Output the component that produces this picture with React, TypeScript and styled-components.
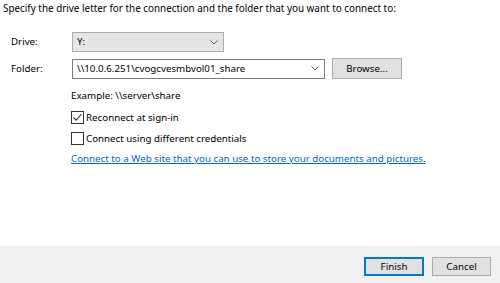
import React from "react";
import styled, { createGlobalStyle } from "styled-components";

const Global = createGlobalStyle`
  html, body { margin: 0; padding: 0; background: #ffffff; }
  body { font-family: "Noto Sans", "Open Sans", sans-serif; font-size: 9.75px; color: #000; }
  * { box-sizing: border-box; }
`;

const Window = styled.div`
  width: 500px;
  height: 283px;
  display: flex;
  flex-direction: column;
  background: #ffffff;
  overflow: hidden;
`;

const Content = styled.div`
  flex: 1;
  padding: 1px 0 0 3px;
`;

const Intro = styled.div`
  font-size: 9.9px;
  line-height: 15px;
  height: 15px;
`;

const Form = styled.div`
  margin-top: 16px;
  padding-left: 8px;
  display: grid;
  grid-template-columns: 61px auto;
  row-gap: 6px;
  align-items: center;
`;

const Label = styled.div`
  line-height: 20px;
`;

const Row = styled.div`
  display: flex;
  align-items: center;
  gap: 7px;
`;

const Field = styled.div<{ $w: number; $gray?: boolean }>`
  width: ${(p) => p.$w}px;
  height: 20px;
  border: 1px solid ${(p) => (p.$gray ? "#adadad" : "#7a7a7a")};
  background: ${(p) => (p.$gray ? "#e5e5e5" : "#ffffff")};
  display: flex;
  align-items: center;
  padding: 0 0 0 4px;
  line-height: 18px;
`;

const FieldText = styled.span`
  flex: 1;
  white-space: nowrap;
`;

const Chevron = styled.svg`
  width: 8px;
  height: 5px;
  margin-right: 5px;
  flex: none;
`;

const Button = styled.button<{ $w: number; $default?: boolean }>`
  width: ${(p) => p.$w}px;
  height: 21px;
  padding: 0;
  font: inherit;
  color: #000;
  background: #e1e1e1;
  border: ${(p) => (p.$default ? "2px solid #0078d7" : "1px solid #adadad")};
  display: flex;
  align-items: center;
  justify-content: center;
`;

const Options = styled.div`
  padding-left: 68px;
  display: flex;
  flex-direction: column;
`;

const Example = styled.div`
  margin-top: 9px;
  line-height: 15px;
`;

const CheckRow = styled.label<{ $gap: number }>`
  display: flex;
  align-items: center;
  gap: 2px;
  height: 15px;
  margin-top: ${(p) => p.$gap}px;
`;

const Box = styled.span`
  width: 13px;
  height: 13px;
  border: 1px solid #333333;
  background: #fff;
  display: flex;
  align-items: center;
  justify-content: center;
  flex: none;
`;

const Link = styled.a`
  margin-top: 5px;
  line-height: 15px;
  color: #0066cc;
  text-decoration: underline;
  white-space: nowrap;
  span { color: #000; text-decoration: none; }
`;

const Footer = styled.div`
  height: 37px;
  background: #f0f0f0;
  display: flex;
  justify-content: flex-end;
  align-items: center;
  gap: 8px;
  padding: 0 9px 0 0;
`;

const FooterButton = styled(Button)`
  height: 19px;
  margin-top: 4px;
`;

const ChevronIcon = () => (
  <Chevron viewBox="0 0 8 5">
    <path d="M0.5 0.5 L4 4 L7.5 0.5" fill="none" stroke="#606060" strokeWidth="1" />
  </Chevron>
);

export default function App() {
  return (
    <>
      <Global />
      <Window>
        <Content>
          <Intro>Specify the drive letter for the connection and the folder that you want to connect to:</Intro>
          <Form>
            <Label>Drive:</Label>
            <Row>
              <Field $w={152} $gray>
                <FieldText>Y:</FieldText>
                <ChevronIcon />
              </Field>
            </Row>
            <Label>Folder:</Label>
            <Row>
              <Field $w={253}>
                <FieldText>\\10.0.6.251\cvogcvesmbvol01_share</FieldText>
                <ChevronIcon />
              </Field>
              <Button $w={70}>Browse...</Button>
            </Row>
          </Form>
          <Options>
            <Example>Example: \\server\share</Example>
            <CheckRow $gap={7}>
              <Box>
                <svg width="11" height="11" viewBox="0 0 11 11">
                  <path d="M1.5 5.5 L4.2 8.2 L9.5 2" fill="none" stroke="#333" strokeWidth="1.1" />
                </svg>
              </Box>
              Reconnect at sign-in
            </CheckRow>
            <CheckRow $gap={6}>
              <Box />
              Connect using different credentials
            </CheckRow>
            <Link>
              Connect to a Web site that you can use to store your documents and pictures<span>.</span>
            </Link>
          </Options>
        </Content>
        <Footer>
          <FooterButton $w={60} $default>Finish</FooterButton>
          <FooterButton $w={59}>Cancel</FooterButton>
        </Footer>
      </Window>
    </>
  );
}
